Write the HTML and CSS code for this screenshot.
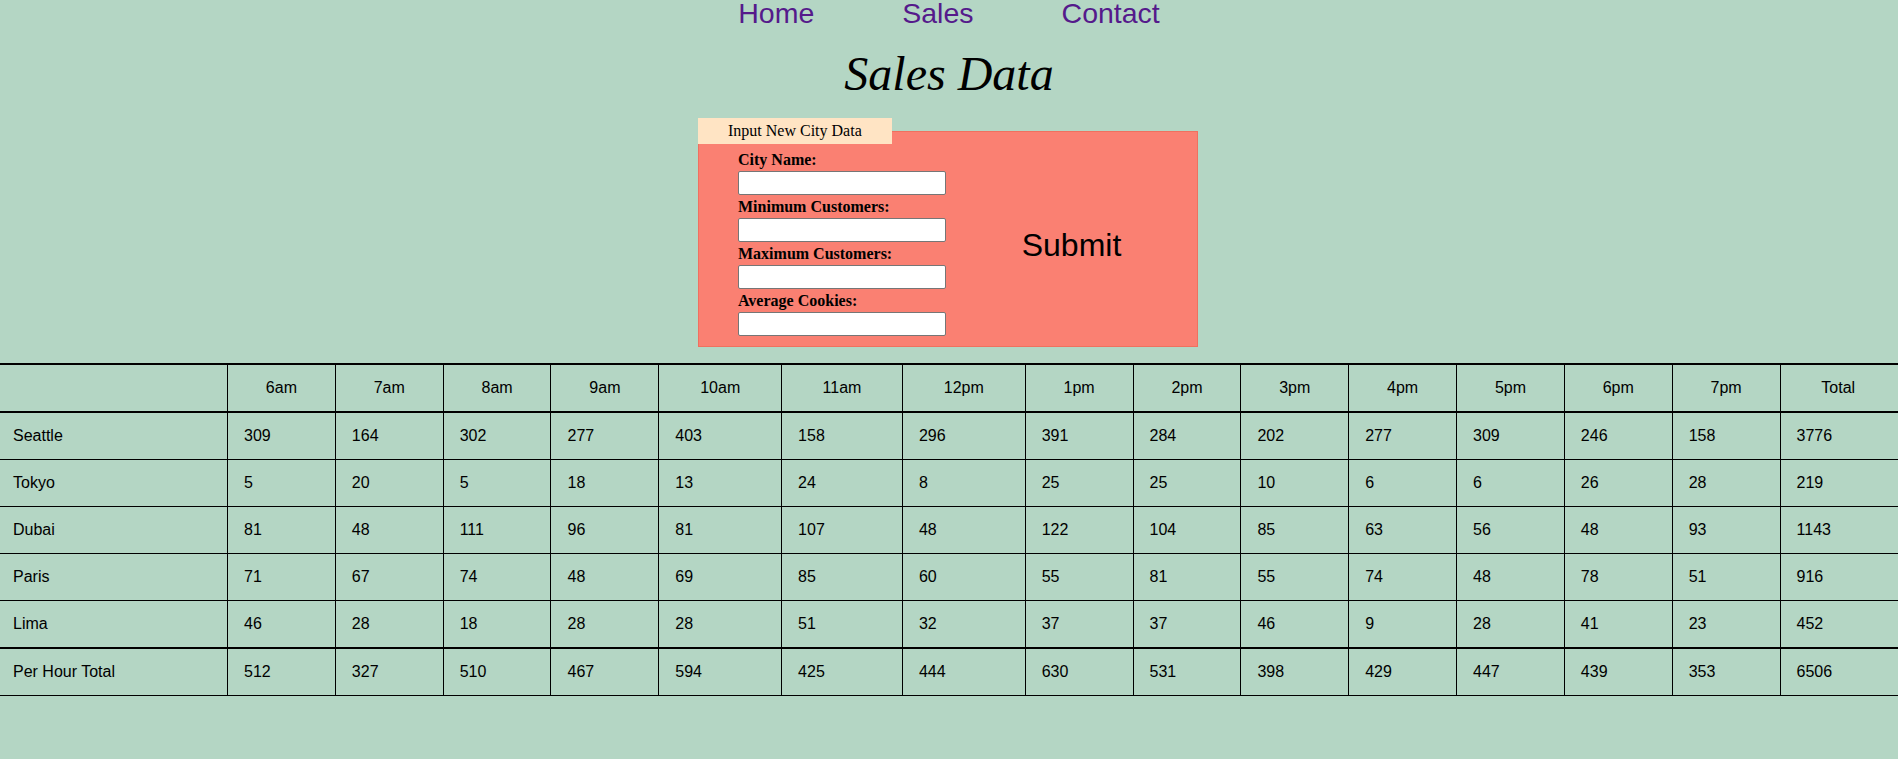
FILE: index.html
```html
<!DOCTYPE html>
<html lang="en">
<head>
<meta charset="utf-8">
<title>Sales Data</title>
<link rel="stylesheet" href="styles.css">
</head>
<body class="page">
<nav class="nav">
  <a class="nav-link" href="#">Home</a>
  <a class="nav-link" href="#">Sales</a>
  <a class="nav-link" href="#">Contact</a>
</nav>
<h1 class="title">Sales Data</h1>
<form class="city-form">
  <fieldset class="city-fieldset">
    <legend class="city-legend">Input New City Data</legend>
    <div class="form-body">
      <div class="fields">
        <label class="field-label" for="city">City Name:</label>
        <input class="field-input" id="city" type="text">
        <label class="field-label" for="min">Minimum Customers:</label>
        <input class="field-input" id="min" type="text">
        <label class="field-label" for="max">Maximum Customers:</label>
        <input class="field-input" id="max" type="text">
        <label class="field-label" for="avg">Average Cookies:</label>
        <input class="field-input" id="avg" type="text">
      </div>
      <div class="submit-area">
        <button class="submit-btn" type="submit">Submit</button>
      </div>
    </div>
  </fieldset>
</form>
<table class="sales">
  <thead>
    <tr class="head-row">
      <th class="cell head-cell first-cell"></th>
      <th class="cell head-cell">6am</th>
      <th class="cell head-cell">7am</th>
      <th class="cell head-cell">8am</th>
      <th class="cell head-cell">9am</th>
      <th class="cell head-cell">10am</th>
      <th class="cell head-cell">11am</th>
      <th class="cell head-cell">12pm</th>
      <th class="cell head-cell">1pm</th>
      <th class="cell head-cell">2pm</th>
      <th class="cell head-cell">3pm</th>
      <th class="cell head-cell">4pm</th>
      <th class="cell head-cell">5pm</th>
      <th class="cell head-cell">6pm</th>
      <th class="cell head-cell">7pm</th>
      <th class="cell head-cell last-cell">Total</th>
    </tr>
  </thead>
  <tbody>
    <tr><td class="cell first-cell">Seattle</td><td class="cell">309</td><td class="cell">164</td><td class="cell">302</td><td class="cell">277</td><td class="cell">403</td><td class="cell">158</td><td class="cell">296</td><td class="cell">391</td><td class="cell">284</td><td class="cell">202</td><td class="cell">277</td><td class="cell">309</td><td class="cell">246</td><td class="cell">158</td><td class="cell last-cell">3776</td></tr>
    <tr><td class="cell first-cell">Tokyo</td><td class="cell">5</td><td class="cell">20</td><td class="cell">5</td><td class="cell">18</td><td class="cell">13</td><td class="cell">24</td><td class="cell">8</td><td class="cell">25</td><td class="cell">25</td><td class="cell">10</td><td class="cell">6</td><td class="cell">6</td><td class="cell">26</td><td class="cell">28</td><td class="cell last-cell">219</td></tr>
    <tr><td class="cell first-cell">Dubai</td><td class="cell">81</td><td class="cell">48</td><td class="cell">111</td><td class="cell">96</td><td class="cell">81</td><td class="cell">107</td><td class="cell">48</td><td class="cell">122</td><td class="cell">104</td><td class="cell">85</td><td class="cell">63</td><td class="cell">56</td><td class="cell">48</td><td class="cell">93</td><td class="cell last-cell">1143</td></tr>
    <tr><td class="cell first-cell">Paris</td><td class="cell">71</td><td class="cell">67</td><td class="cell">74</td><td class="cell">48</td><td class="cell">69</td><td class="cell">85</td><td class="cell">60</td><td class="cell">55</td><td class="cell">81</td><td class="cell">55</td><td class="cell">74</td><td class="cell">48</td><td class="cell">78</td><td class="cell">51</td><td class="cell last-cell">916</td></tr>
    <tr><td class="cell first-cell">Lima</td><td class="cell">46</td><td class="cell">28</td><td class="cell">18</td><td class="cell">28</td><td class="cell">28</td><td class="cell">51</td><td class="cell">32</td><td class="cell">37</td><td class="cell">37</td><td class="cell">46</td><td class="cell">9</td><td class="cell">28</td><td class="cell">41</td><td class="cell">23</td><td class="cell last-cell">452</td></tr>
  </tbody>
  <tfoot>
    <tr class="foot-row"><td class="cell first-cell">Per Hour Total</td><td class="cell">512</td><td class="cell">327</td><td class="cell">510</td><td class="cell">467</td><td class="cell">594</td><td class="cell">425</td><td class="cell">444</td><td class="cell">630</td><td class="cell">531</td><td class="cell">398</td><td class="cell">429</td><td class="cell">447</td><td class="cell">439</td><td class="cell">353</td><td class="cell last-cell">6506</td></tr>
  </tfoot>
</table>
</body>
</html>
```

FILE: styles.css
```css
html, body {
  margin: 0;
  padding: 0;
}

.page {
  background: #b4d6c4;
  color: #000;
  font-family: "Liberation Serif", "Times New Roman", serif;
  font-size: 16px;
}

.nav {
  display: flex;
  justify-content: center;
  gap: 88px;
  margin: 0;
  padding: 0;
  font-family: "Liberation Sans", Arial, sans-serif;
  font-size: 28.5px;
  line-height: 26px;
  height: 26px;
}

.nav-link {
  color: #551a8b;
  text-decoration: none;
}

.title {
  margin: 21px 0 17px;
  text-align: center;
  font-family: "Liberation Serif", "Times New Roman", serif;
  font-style: italic;
  font-weight: normal;
  font-size: 48px;
  line-height: 54px;
}

.city-form {
  margin: 0;
}

.city-fieldset {
  box-sizing: border-box;
  width: 500px;
  margin: 0 calc(50% - 249px) 0 calc(50% - 251px);
  padding: 4px 0 10px 0;
  border: 1px solid #f0705f;
  background: #fa8072;
  min-width: 0;
}

.city-legend {
  margin-left: -1px;
  padding: 0 30px;
  background: #ffe4c4;
  line-height: 26px;
  font-size: 16px;
}

.form-body {
  display: flex;
  align-items: center;
  padding-left: 39px;
}

.fields {
  display: flex;
  flex-direction: column;
  align-items: flex-start;
}

.field-label {
  display: block;
  font-weight: bold;
  line-height: 20px;
  padding-top: 2px;
  margin-bottom: 1px;
}

.field-input {
  box-sizing: border-box;
  width: 208px;
  height: 24px;
  margin: 0;
  padding: 1px 2px;
  border: 1px solid #767676;
  border-radius: 2px;
  background: #fff;
}

.submit-area {
  flex: 1;
  display: flex;
  justify-content: center;
  align-items: center;
  padding-top: 6px;
}

.submit-btn {
  background: transparent;
  border: none;
  padding: 0;
  margin: 0;
  color: #000;
  font-family: "Liberation Sans", Arial, sans-serif;
  font-size: 32px;
  line-height: 37px;
  cursor: pointer;
}

.sales {
  width: 100%;
  border-collapse: collapse;
  margin-top: 16px;
  font-family: "Liberation Sans", Arial, sans-serif;
  font-size: 16px;
  line-height: 18px;
}

.cell {
  border: 1px solid #000;
  padding: 14px 16px;
  text-align: left;
  font-weight: normal;
}

.head-cell {
  text-align: center;
}

.first-cell {
  width: 198px;
  border-left: none;
  padding-left: 13px;
}

.last-cell {
  border-right: none;
  padding-right: 18px;
}

.head-row {
  border-top: 2px solid #000;
  border-bottom: 2px solid #000;
}

.foot-row {
  border-top: 2px solid #000;
}
```
